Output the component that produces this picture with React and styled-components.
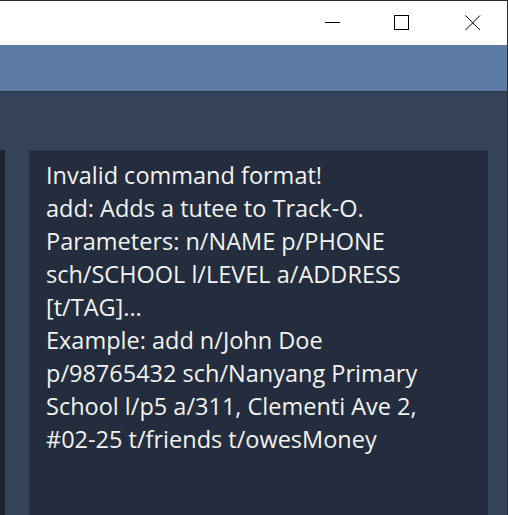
import React from 'react'
import styled, { createGlobalStyle } from 'styled-components'

const GlobalStyle = createGlobalStyle`
  html, body {
    margin: 0;
    padding: 0;
    height: 100%;
    overflow: hidden;
    background: #34425a;
  }
  #root {
    height: 100%;
  }
`

const lines = [
  'Invalid command format!',
  'add: Adds a tutee to Track-O.',
  'Parameters: n/NAME p/PHONE',
  'sch/SCHOOL l/LEVEL a/ADDRESS',
  '[t/TAG]...',
  'Example: add n/John Doe',
  'p/98765432 sch/Nanyang Primary',
  'School l/p5 a/311, Clementi Ave 2,',
  '#02-25 t/friends t/owesMoney',
]

const App = () => {
  return (
    <>
      <GlobalStyle />
      <Window>
        <TitleBar>
          <WinButton aria-label="Minimize">
            <svg width="16" height="16" viewBox="0 0 16 16">
              <line x1="0" y1="7.5" x2="15" y2="7.5" stroke="#000" strokeWidth="1" />
            </svg>
          </WinButton>
          <WinButton aria-label="Maximize" $gap={53}>
            <svg width="16" height="16" viewBox="0 0 16 16">
              <rect x="0.5" y="0.5" width="14" height="14" fill="none" stroke="#000" strokeWidth="1" />
            </svg>
          </WinButton>
          <WinButton aria-label="Close" $gap={55}>
            <svg width="16" height="16" viewBox="0 0 16 16">
              <path d="M0.5 0.5 L15 15 M15 0.5 L0.5 15" stroke="#000" strokeWidth="1" />
            </svg>
          </WinButton>
        </TitleBar>
        <MenuBar />
        <Content>
          <SidePanel />
          <ResultBox>
            {lines.map((line) => (
              <Line key={line}>{line}</Line>
            ))}
          </ResultBox>
        </Content>
      </Window>
    </>
  )
}

const Window = styled.div`
  height: 100%;
  box-sizing: border-box;
  display: flex;
  flex-direction: column;
  border-top: 1px solid #2b2b2b;
  border-right: 1px solid #2b2b2b;
  background: #34425a;
`

const TitleBar = styled.div`
  height: 44px;
  flex-shrink: 0;
  background: #ffffff;
  display: flex;
  justify-content: flex-end;
  align-items: flex-start;
  padding-right: 26px;
`

const WinButton = styled.div`
  width: 16px;
  height: 16px;
  margin-top: 14px;
  margin-left: ${(p) => p.$gap || 0}px;
  display: flex;
`

const MenuBar = styled.div`
  height: 46px;
  flex-shrink: 0;
  background: #5b7ba3;
  border-bottom: 1px solid #2e3a4d;
`

const Content = styled.div`
  flex: 1;
  display: flex;
  align-items: stretch;
  padding: 58px 19px 0 0;
  gap: 24px;
  min-height: 0;
`

const SidePanel = styled.div`
  width: 5px;
  flex-shrink: 0;
  background: #1d2532;
`

const ResultBox = styled.div`
  flex: 1;
  box-sizing: border-box;
  background: #232d3d;
  border-top: 1px solid #2c384a;
  border-left: 1px solid #2c384a;
  padding: 8px 0 0 16px;
  color: #f2f2f2;
  font-family: 'Open Sans', 'Noto Sans', sans-serif;
  font-size: 23.5px;
  line-height: 33px;
  overflow: hidden;
`

const Line = styled.div`
  white-space: nowrap;
`

export default App
